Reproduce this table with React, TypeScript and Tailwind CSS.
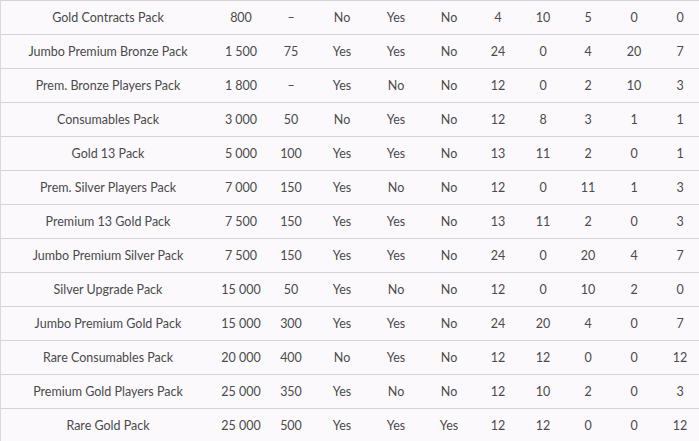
import React from 'react';

const rows: string[][] = [
  ['Gold Contracts Pack', '800', '–', 'No', 'Yes', 'No', '4', '10', '5', '0', '0'],
  ['Jumbo Premium Bronze Pack', '1 500', '75', 'Yes', 'Yes', 'No', '24', '0', '4', '20', '7'],
  ['Prem. Bronze Players Pack', '1 800', '–', 'Yes', 'No', 'No', '12', '0', '2', '10', '3'],
  ['Consumables Pack', '3 000', '50', 'No', 'Yes', 'No', '12', '8', '3', '1', '1'],
  ['Gold 13 Pack', '5 000', '100', 'Yes', 'Yes', 'No', '13', '11', '2', '0', '1'],
  ['Prem. Silver Players Pack', '7 000', '150', 'Yes', 'No', 'No', '12', '0', '11', '1', '3'],
  ['Premium 13 Gold Pack', '7 500', '150', 'Yes', 'Yes', 'No', '13', '11', '2', '0', '3'],
  ['Jumbo Premium Silver Pack', '7 500', '150', 'Yes', 'Yes', 'No', '24', '0', '20', '4', '7'],
  ['Silver Upgrade Pack', '15 000', '50', 'Yes', 'No', 'No', '12', '0', '10', '2', '0'],
  ['Jumbo Premium Gold Pack', '15 000', '300', 'Yes', 'Yes', 'No', '24', '20', '4', '0', '7'],
  ['Rare Consumables Pack', '20 000', '400', 'No', 'Yes', 'No', '12', '12', '0', '0', '12'],
  ['Premium Gold Players Pack', '25 000', '350', 'Yes', 'No', 'No', '12', '10', '2', '0', '3'],
  ['Rare Gold Pack', '25 000', '500', 'Yes', 'Yes', 'Yes', '12', '12', '0', '0', '12'],
];

export default function App() {
  return (
    <div className="w-[699px] h-[441px] overflow-hidden bg-white">
      <div className="w-[702px] border-l border-[#dcd8dc] bg-[#fbf9fb] text-[12.5px] text-[#4a4a4a] font-['Lato',sans-serif]">
        {rows.map((r, i) => (
          <div
            key={i}
            className="grid grid-cols-[214px_52px_48px_54px_54px_52px_46px_44px_46px_46px_46px] h-[34px] pt-[2px] border-t border-[#d6d2d6] items-center text-center"
          >
            {r.map((c, j) => (
              <div key={j} className="whitespace-nowrap">
                {c}
              </div>
            ))}
          </div>
        ))}
      </div>
    </div>
  );
}
